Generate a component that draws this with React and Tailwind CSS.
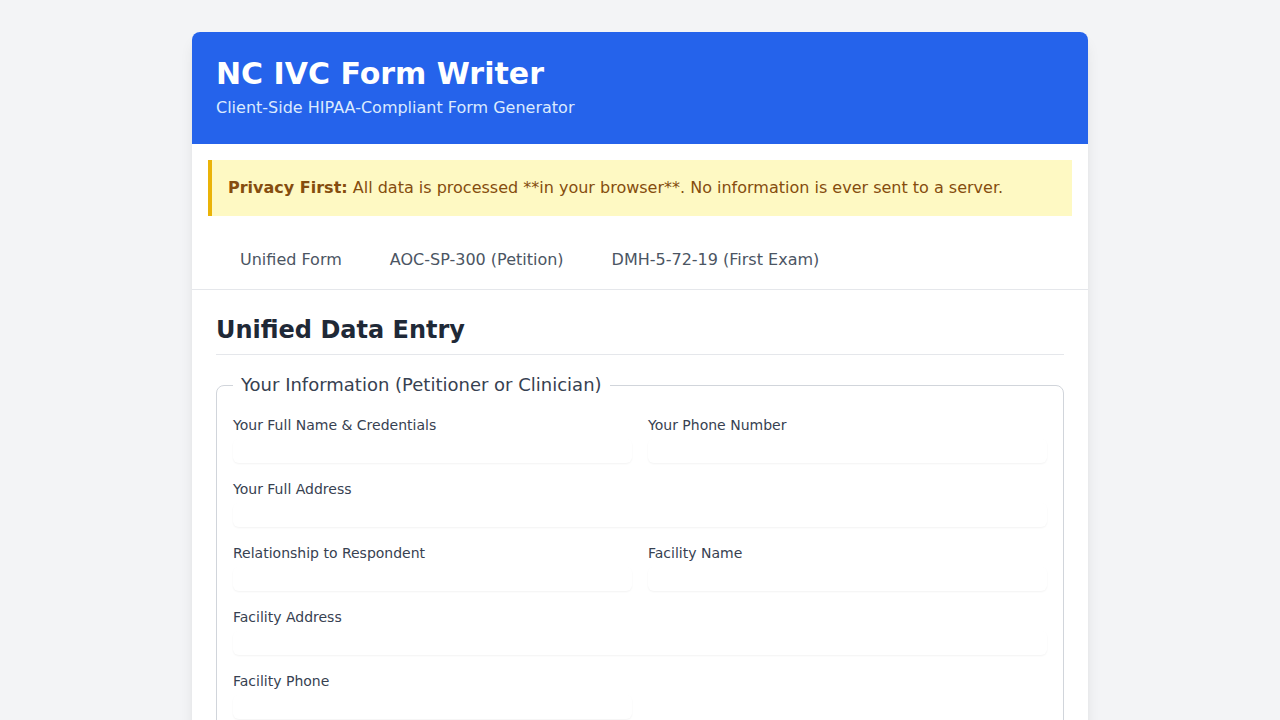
import React from "react";

const fields = [
  { label: "Your Full Name & Credentials", id: "name" },
  { label: "Your Phone Number", id: "phone" },
  { label: "Your Full Address", id: "address", wide: true },
  { label: "Relationship to Respondent", id: "relationship" },
  { label: "Facility Name", id: "facilityName" },
  { label: "Facility Address", id: "facilityAddress", wide: true },
  { label: "Facility Phone", id: "facilityPhone" },
];

const tabs = ["Unified Form", "AOC-SP-300 (Petition)", "DMH-5-72-19 (First Exam)"];

export default function App() {
  return (
    <div className="min-h-screen bg-[#f3f4f6] font-['DejaVu_Sans',sans-serif] pt-8 pb-8">
      <div className="max-w-4xl mx-auto bg-white rounded-lg shadow-[0_10px_15px_-3px_rgba(0,0,0,0.1),0_4px_6px_-4px_rgba(0,0,0,0.1)] overflow-hidden">
        <header className="bg-[#2563eb] text-white px-6 py-6">
          <h1 className="text-3xl font-bold">NC IVC Form Writer</h1>
          <p className="mt-1 text-[#dbeafe]">Client-Side HIPAA-Compliant Form Generator</p>
        </header>

        <div className="m-4 bg-[#fef9c3] border-l-4 border-[#eab308] text-[#854d0e] p-4">
          <p>
            <strong className="font-bold">Privacy First:</strong> All data is processed **in your browser**. No
            information is ever sent to a server.
          </p>
        </div>

        <nav className="flex px-6 border-b border-[#e5e7eb]">
          {tabs.map((t) => (
            <button key={t} className="px-6 py-4 -mb-px border-b-2 border-transparent text-[#4b5563]">
              {t}
            </button>
          ))}
        </nav>

        <main className="p-6">
          <h2 className="text-2xl font-bold text-[#1f2937] pb-2 border-b border-[#e5e7eb] mb-4">Unified Data Entry</h2>

          <fieldset className="border border-[#d1d5db] rounded-lg px-4 pb-4">
            <legend className="px-2 text-lg text-[#374151]">Your Information (Petitioner or Clinician)</legend>
            <div className="grid grid-cols-2 gap-4 pt-4">
              {fields.map((f) => (
                <div key={f.id} className={f.wide ? "col-span-2" : ""}>
                  <label htmlFor={f.id} className="block text-sm text-[#374151]">
                    {f.label}
                  </label>
                  <input
                    id={f.id}
                    type="text"
                    className="mt-1 block w-full rounded-md shadow-[0_1px_2px_0_rgba(0,0,0,0.05)] outline-none"
                  />
                </div>
              ))}
            </div>
          </fieldset>
        </main>
      </div>
    </div>
  );
}
